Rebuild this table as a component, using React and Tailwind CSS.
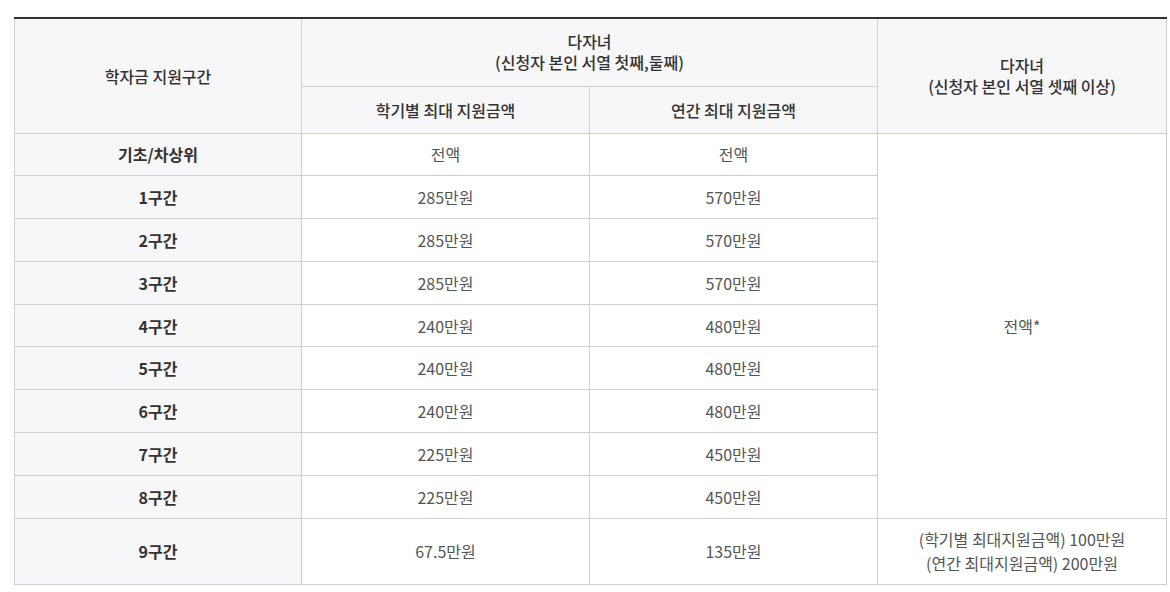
import React from "react";

const rows = [
  ["기초/차상위", "전액", "전액"],
  ["1구간", "285만원", "570만원"],
  ["2구간", "285만원", "570만원"],
  ["3구간", "285만원", "570만원"],
  ["4구간", "240만원", "480만원"],
  ["5구간", "240만원", "480만원"],
  ["6구간", "240만원", "480만원"],
  ["7구간", "225만원", "450만원"],
  ["8구간", "225만원", "450만원"],
];

export default function App() {
  const font = { fontFamily: '"Noto Sans CJK KR", "Noto Sans", sans-serif' };
  return (
    <div className="bg-white w-[1170px] h-[592px] pt-[17px] pl-[14px]" style={font}>
      <table className="w-[1152px] border-collapse table-fixed text-[16px] text-[#555] border-t-2 border-t-[#333]">
        <colgroup>
          <col className="w-[287px]" />
          <col className="w-[288px]" />
          <col className="w-[288px]" />
          <col className="w-[289px]" />
        </colgroup>
        <thead>
          <tr className="h-[68px]">
            <th rowSpan={2} className="bg-[#f7f7f9] border border-[#cfcfcf] border-t-0 font-medium text-[#333] text-center align-middle">
              학자금 지원구간
            </th>
            <th colSpan={2} className="bg-[#f7f7f9] border border-[#cfcfcf] border-t-0 font-medium text-[#333] text-center leading-[21px]">
              다자녀
              <br />
              (신청자 본인 서열 첫째,둘째)
            </th>
            <th rowSpan={2} className="bg-[#f7f7f9] border border-[#cfcfcf] border-t-0 font-medium text-[#333] text-center leading-[21px]">
              다자녀
              <br />
              (신청자 본인 서열 셋째 이상)
            </th>
          </tr>
          <tr className="h-[47px]">
            <th className="bg-[#f7f7f9] border border-[#cfcfcf] font-medium text-[#333] text-center">학기별 최대 지원금액</th>
            <th className="bg-[#f7f7f9] border border-[#cfcfcf] font-medium text-[#333] text-center">연간 최대 지원금액</th>
          </tr>
        </thead>
        <tbody>
          {rows.map((r, i) => (
            <tr key={i} className="h-[42.8px]">
              <td className="bg-[#f7f7f9] border border-[#cfcfcf] font-bold text-[#333] text-center">{r[0]}</td>
              <td className="border border-[#cfcfcf] text-center">{r[1]}</td>
              <td className="border border-[#cfcfcf] text-center">{r[2]}</td>
              {i === 0 && (
                <td rowSpan={9} className="border border-[#cfcfcf] text-center">
                  전액*
                </td>
              )}
            </tr>
          ))}
          <tr className="h-[66px]">
            <td className="bg-[#f7f7f9] border border-[#cfcfcf] font-bold text-[#333] text-center">9구간</td>
            <td className="border border-[#cfcfcf] text-center">67.5만원</td>
            <td className="border border-[#cfcfcf] text-center">135만원</td>
            <td className="border border-[#cfcfcf] text-center leading-[24px]">
              (학기별 최대지원금액) 100만원
              <br />
              (연간 최대지원금액) 200만원
            </td>
          </tr>
        </tbody>
      </table>
    </div>
  );
}
